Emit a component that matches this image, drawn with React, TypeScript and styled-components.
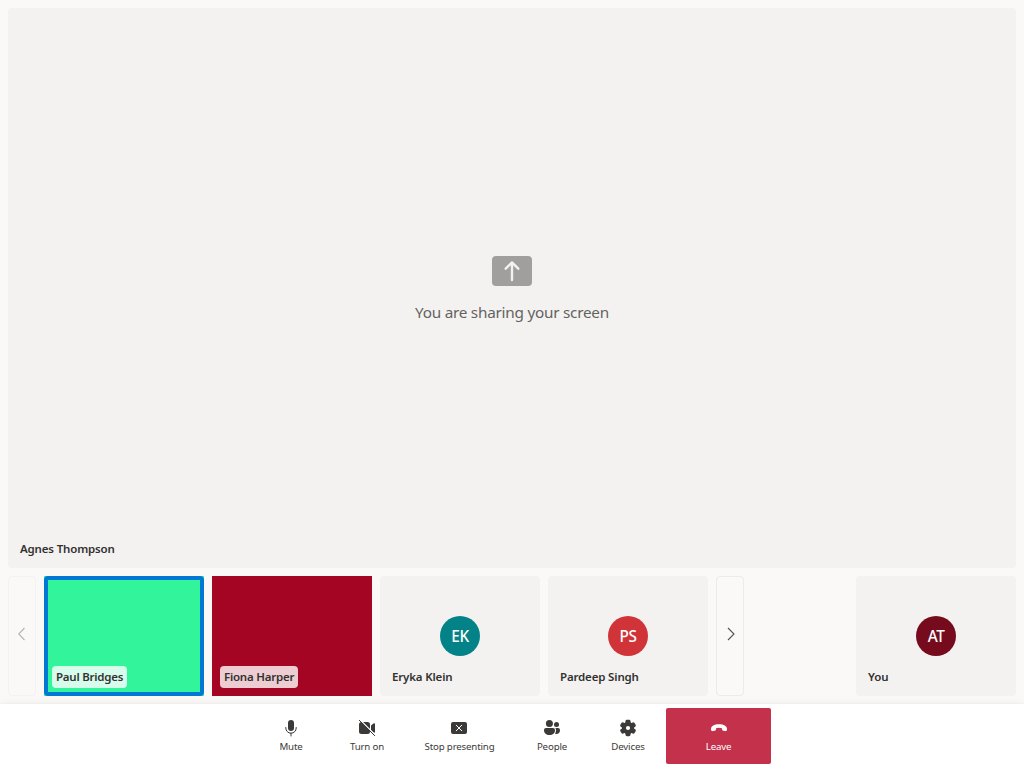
import React from "react";
import styled, { createGlobalStyle } from "styled-components";

const GlobalStyle = createGlobalStyle`
  * { box-sizing: border-box; }
  body { margin: 0; background: #faf9f8; color: #323130; font-family: "Noto Sans", "Open Sans", sans-serif; }
  button { font: inherit; color: inherit; margin: 0; padding: 0; border: 0; background: none; }
`;

const Page = styled.div`
  display: flex;
  flex-direction: column;
  width: 1024px;
  height: 768px;
  overflow: hidden;
`;

const Gallery = styled.main`
  flex: 1;
  min-height: 0;
  display: flex;
  flex-direction: column;
  gap: 8px;
  padding: 8px;
`;

const Stage = styled.section`
  position: relative;
  flex: 1;
  display: flex;
  flex-direction: column;
  align-items: center;
  justify-content: center;
  gap: 16px;
  padding-top: 2px;
  border-radius: 4px;
  background: #f3f2f1;
`;

const StageText = styled.div`
  font-size: 15.3px;
  line-height: 20px;
  letter-spacing: -0.24px;
  color: #646260;
`;

const Strip = styled.div`
  display: flex;
  gap: 8px;
  height: 120px;
`;

const PageButton = styled.button<{ $muted?: boolean }>`
  display: flex;
  align-items: center;
  justify-content: center;
  width: 28px;
  padding: ${(p) => (p.$muted ? "0 1px 4px 0" : "0 0 4px 1px")};
  border: 1px solid ${(p) => (p.$muted ? "#f3f2f1" : "#edebe9")};
  border-radius: 4px;
  color: ${(p) => (p.$muted ? "#b5b3b1" : "#55534f")};
`;

const Tile = styled.div<{ $video?: string; $end?: boolean }>`
  position: relative;
  display: flex;
  align-items: center;
  justify-content: center;
  width: 160px;
  margin-left: ${(p) => (p.$end ? "auto" : "0")};
  border-radius: ${(p) => (p.$video ? "0" : "4px")};
  background: ${(p) => p.$video ?? "#f3f2f1"};
`;

const SpeakingFrame = styled.div`
  align-self: stretch;
  flex: 1;
  border: 4px solid #0078d4;
  border-radius: 4px;
`;

const NameTag = styled.div<{ $filled?: boolean }>`
  position: absolute;
  left: 8px;
  bottom: 8px;
  height: 22px;
  padding: 0 4px;
  border-radius: 4px;
  background: ${(p) => (p.$filled ? "rgba(255, 255, 255, 0.8)" : "transparent")};
  font-size: 11.5px;
  font-weight: 600;
  line-height: 21px;
  letter-spacing: ${(p) => (p.$filled ? "-0.23px" : "-0.16px")};
  white-space: nowrap;
`;

const Avatar = styled.div<{ $color: string }>`
  display: flex;
  align-items: center;
  justify-content: center;
  width: 40px;
  height: 40px;
  border-radius: 50%;
  background: ${(p) => p.$color};
  color: #fff;
  font-size: 15.3px;
  font-weight: 500;
  letter-spacing: -0.4px;
`;

const ControlBar = styled.footer`
  position: relative;
  display: flex;
  justify-content: center;
  height: 64px;
  padding: 4px 0;
  background: #fff;
  box-shadow: 0 6.4px 14.4px rgba(0, 0, 0, 0.132), 0 1.2px 3.6px rgba(0, 0, 0, 0.108);
`;

const ControlButton = styled.button<{ $width?: number; $danger?: boolean }>`
  display: flex;
  flex-direction: column;
  align-items: center;
  width: ${(p) => p.$width ?? 76}px;
  height: 56px;
  padding-top: 10px;
  border-radius: 2px;
  background: ${(p) => (p.$danger ? "#c4314b" : "transparent")};
  color: ${(p) => (p.$danger ? "#fff" : "#3b3a39")};
`;

const ControlLabel = styled.span`
  margin-top: 1px;
  font-size: 9.7px;
  line-height: 16px;
  letter-spacing: -0.16px;
  white-space: nowrap;
`;

const IconSvg = styled.svg<{ $nudge?: boolean }>`
  flex: none;
  margin-right: ${(p) => (p.$nudge ? "1px" : "0")};
`;

const Icon = ({ children, nudge }: { children: React.ReactNode; nudge?: boolean }) => (
  <IconSvg $nudge={nudge} width="20" height="20" viewBox="0 0 20 20" fill="currentColor">{children}</IconSvg>
);

const Chevron = ({ d }: { d: string }) => (
  <svg width="8" height="14" viewBox="0 0 8 14" fill="none" stroke="currentColor" strokeWidth="1.1"><path d={d} /></svg>
);

export default function App() {
  return (
    <Page>
      <GlobalStyle />
      <Gallery>
        <Stage>
          <svg width="40" height="30" viewBox="0 0 40 30">
            <rect width="40" height="30" rx="4" fill="#a19f9d" />
            <path d="M20 24V6.5M13.7 12.7 20 6.4l6.3 6.3" fill="none" stroke="#f3f2f1" strokeWidth="2.4" strokeLinecap="round" strokeLinejoin="round" />
          </svg>
          <StageText>You are sharing your screen</StageText>
          <NameTag>Agnes Thompson</NameTag>
        </Stage>
        <Strip>
          <PageButton $muted aria-label="Previous"><Chevron d="M6.5 1 .7 7l5.800 6" /></PageButton>
          <Tile $video="#32f59b">
            <SpeakingFrame />
            <NameTag $filled>Paul Bridges</NameTag>
          </Tile>
          <Tile $video="#a40522"><NameTag $filled>Fiona Harper</NameTag></Tile>
          <Tile><Avatar $color="#038387">EK</Avatar><NameTag>Eryka Klein</NameTag></Tile>
          <Tile><Avatar $color="#d13438">PS</Avatar><NameTag>Pardeep Singh</NameTag></Tile>
          <PageButton aria-label="Next"><Chevron d="m1 1 6 6-6 6" /></PageButton>
          <Tile $end><Avatar $color="#750b1c">AT</Avatar><NameTag>You</NameTag></Tile>
        </Strip>
      </Gallery>
      <ControlBar>
        <ControlButton>
          <Icon>
            <rect x="7" y="2" width="6" height="11" rx="3" />
            <path d="M4.8 9.5v.5a5.2 5.2 0 0 0 10.4 0v-.5M10 15.2V18" fill="none" stroke="currentColor" strokeLinecap="round" />
          </Icon>
          <ControlLabel>Mute</ControlLabel>
        </ControlButton>
        <ControlButton>
          <Icon>
            <rect x="2" y="4" width="11" height="12" rx="2.5" />
            <path d="m14 7.5 2.8-2.2c.5-.4 1.2 0 1.2.6v8.2c0 .6-.7 1-1.2.6L14 12.5Z" />
            <path d="m3.2 1.8 15.5 15.5" stroke="#fff" strokeWidth="1.2" />
            <path d="m2.3 2.3 15.4 15.4" stroke="currentColor" strokeWidth="1" strokeLinecap="round" />
          </Icon>
          <ControlLabel>Turn on</ControlLabel>
        </ControlButton>
        <ControlButton $width={109}>
          <Icon nudge>
            <rect x="2" y="4" width="16" height="12" rx="2" />
            <path d="m7.2 7.2 5.6 5.6m0-5.6-5.6 5.6" stroke="#fff" strokeLinecap="round" />
          </Icon>
          <ControlLabel>Stop presenting</ControlLabel>
        </ControlButton>
        <ControlButton>
          <Icon>
            <circle cx="7.4" cy="5.5" r="3.5" />
            <circle cx="14.5" cy="6.5" r="2.5" />
            <path d="M4 10h7a2 2 0 0 1 2 2c0 3.200-2.200 5-5.500 5S2 15.200 2 12a2 2 0 0 1 2-2Z" />
            <path d="M13.3 10H16a2 2 0 0 1 2 2c0 2.700-1.400 4-3.600 4-.5 0-.9 0-1.300-.2.600-1 .9-2.200.9-3.800a3 3 0 0 0-.7-2Z" />
          </Icon>
          <ControlLabel>People</ControlLabel>
        </ControlButton>
        <ControlButton>
          <Icon>
            <circle cx="10" cy="10" r="6.2" />
            {[0, 60, 120].map((angle) => (
              <rect key={angle} x="7.5" y="1.8" width="5" height="16.4" rx="1.4" transform={`rotate(${angle} 10 10)`} />
            ))}
            <circle cx="10" cy="10" r="2.1" fill="#fff" />
          </Icon>
          <ControlLabel>Devices</ControlLabel>
        </ControlButton>
        <ControlButton $width={105} $danger>
          <Icon>
            <path d="M10 6.2c4.8 0 8 1.8 8 4.8 0 1.500-.5 2.300-1.600 2.100l-2.200-.4c-.8-.2-1.200-.7-1.200-1.500V10.200c-1.800-.7-4.200-.7-6 0v1c0 .8-.4 1.300-1.200 1.500l-2.200.4C2.500 13.300 2 12.500 2 11c0-3 3.200-4.800 8-4.800Z" />
          </Icon>
          <ControlLabel>Leave</ControlLabel>
        </ControlButton>
      </ControlBar>
    </Page>
  );
}
